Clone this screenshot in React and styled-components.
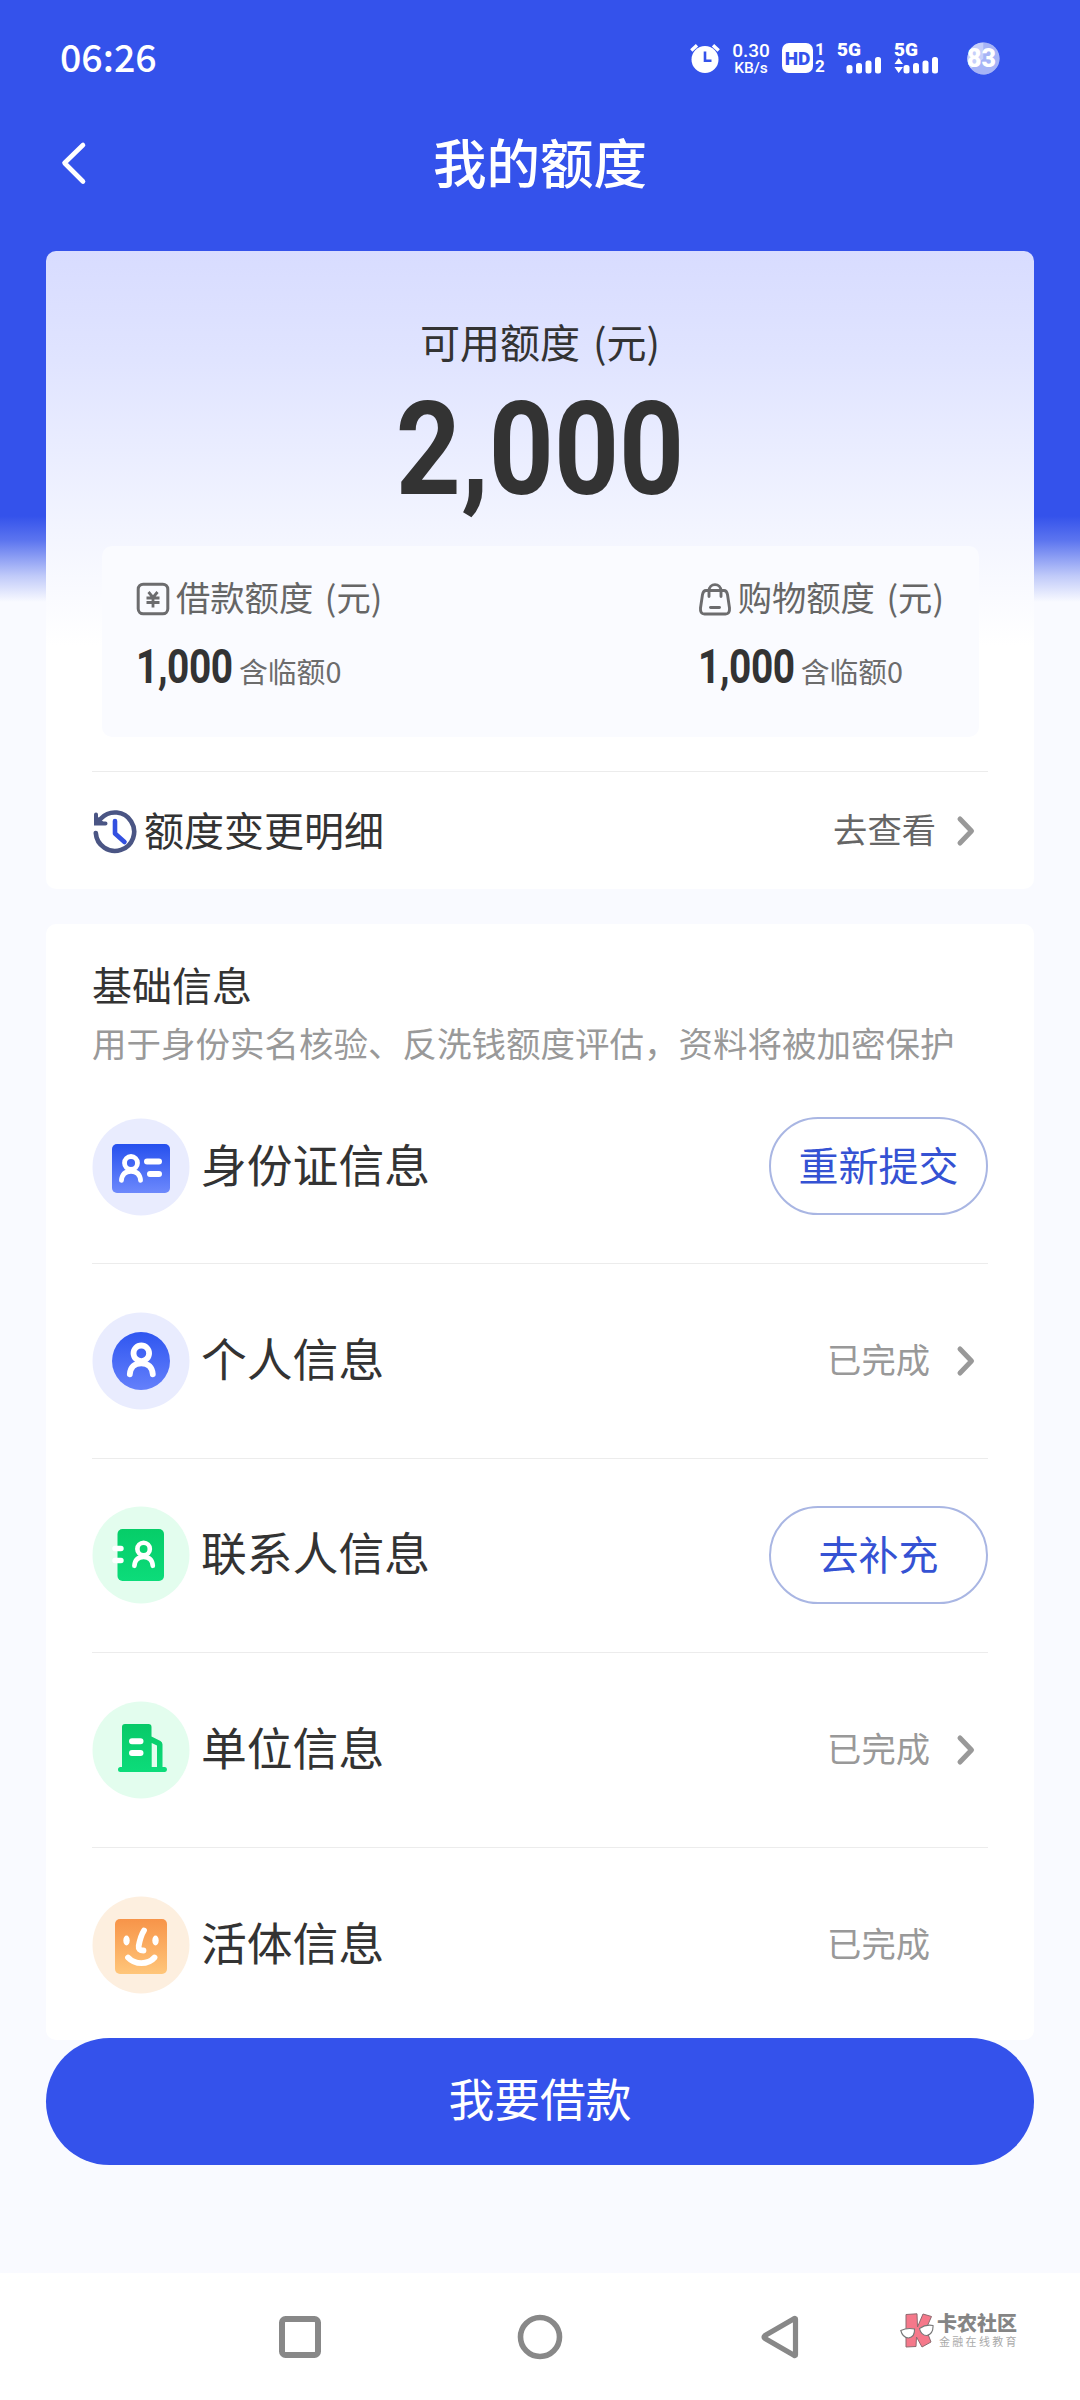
import React from "react";
import styled, { createGlobalStyle } from "styled-components";

const GlobalStyle = createGlobalStyle`
  * {
    box-sizing: border-box;
  }
  body {
    margin: 0;
    font-family: "Noto Sans CJK SC", "Noto Sans", sans-serif;
    color: #333;
  }
  svg {
    display: block;
    flex: none;
  }
`;

// Head and shoulders outline shared by the id, personal and contact badges
const Person = ({ x, y, scale = 1 }) => (
  <g
    transform={`translate(${x} ${y}) scale(${scale})`}
    fill="none"
    stroke="#fff"
    strokeWidth="5.8"
    strokeLinecap="round"
  >
    <circle r="7.8" />
    <path d="M-11.5 21C-11 14-7 10 0 10S11 14 11.5 21" />
  </g>
);

const IdBadge = () => (
  <svg width="98" height="98" viewBox="0 0 98 98">
    <defs>
      <linearGradient id="idFill" x1="0" y1="0" x2="0" y2="1">
        <stop offset="0" stopColor="#2650ee" />
        <stop offset="1" stopColor="#6d89fc" />
      </linearGradient>
    </defs>
    <circle cx="49" cy="49" r="48.5" fill="#e9ecfe" />
    <rect x="20" y="26" width="58" height="49" rx="5" fill="url(#idFill)" />
    <Person x={39} y={45} scale={0.83} />
    <path d="M55 43.5H67M58 56H67" stroke="#fff" strokeWidth="6" strokeLinecap="round" />
  </svg>
);

const PersonalBadge = () => (
  <svg width="98" height="98" viewBox="0 0 98 98">
    <defs>
      <linearGradient id="personalFill" x1="0" y1="0" x2="0" y2="1">
        <stop offset="0" stopColor="#2f56f0" />
        <stop offset="1" stopColor="#6480fb" />
      </linearGradient>
    </defs>
    <circle cx="49" cy="49" r="48.5" fill="#e9ecfe" />
    <circle cx="49" cy="49" r="29" fill="url(#personalFill)" />
    <Person x={49.3} y={41.3} />
  </svg>
);

const ContactBadge = () => (
  <svg width="98" height="98" viewBox="0 0 98 98">
    <defs>
      <linearGradient id="contactFill" x1="0" y1="0" x2="0" y2="1">
        <stop offset="0" stopColor="#06cd68" />
        <stop offset="1" stopColor="#0cdc7a" />
      </linearGradient>
    </defs>
    <circle cx="49" cy="49" r="48.5" fill="#e3fdee" />
    <rect x="25.5" y="23" width="46.5" height="52" rx="5" fill="url(#contactFill)" />
    <path d="M23 42.5H29M23 54.5H29" stroke="#fff" strokeWidth="5.4" strokeLinecap="round" />
    <Person x={51.6} y={43} scale={0.8} />
  </svg>
);

const CompanyBadge = () => (
  <svg width="98" height="98" viewBox="0 0 98 98">
    <defs>
      <linearGradient id="companyFill" x1="0" y1="0" x2="0" y2="1">
        <stop offset="0" stopColor="#08c968" />
        <stop offset="1" stopColor="#0cdc7a" />
      </linearGradient>
    </defs>
    <circle cx="49" cy="49" r="48.5" fill="#e3fdee" />
    <path
      fill="url(#companyFill)"
      fillRule="evenodd"
      d="M33 23H56.5Q59.5 23 59.5 26V35.5L68.5 40Q70.5 41 70.5 43.5V66H73Q75 66.3 75 68.5T73 71H28.5Q26 71 26 68.5T28.5 66H30V26Q30 23 33 23ZM59.7 42V66H65V44.5Z"
    />
    <path d="M40 40.3H48.5M40 52H48.5" stroke="#fff" strokeWidth="6" strokeLinecap="round" />
  </svg>
);

const FaceBadge = () => (
  <svg width="98" height="98" viewBox="0 0 98 98">
    <defs>
      <linearGradient id="faceFill" x1="0" y1="0" x2="0" y2="1">
        <stop offset="0" stopColor="#f79449" />
        <stop offset="1" stopColor="#ffc67a" />
      </linearGradient>
    </defs>
    <circle cx="49" cy="49" r="48.5" fill="#fdefdf" />
    <rect x="23" y="23" width="52" height="55" rx="5" fill="url(#faceFill)" />
    <ellipse cx="34.5" cy="44.5" rx="3.2" ry="5" fill="#fff" />
    <ellipse cx="63.5" cy="44.5" rx="3.2" ry="5" fill="#fff" />
    <g fill="none" stroke="#fff" strokeWidth="5.8" strokeLinecap="round" strokeLinejoin="round">
      <path d="M52 34.5Q48.5 40 46.7 50Q46 54.5 51.5 54.5" />
      <path d="M36 61.5C43 69 56 69 62.5 61.5" />
    </g>
  </svg>
);

const rows = [
  { label: "身份证信息", Icon: IdBadge, action: "重新提交" },
  { label: "个人信息", Icon: PersonalBadge, state: "已完成", arrow: true },
  { label: "联系人信息", Icon: ContactBadge, action: "去补充" },
  { label: "单位信息", Icon: CompanyBadge, state: "已完成", arrow: true },
  { label: "活体信息", Icon: FaceBadge, state: "已完成" },
];

const Chevron = () => (
  <svg width="20" height="34" viewBox="0 0 20 34">
    <path d="M4 5L15.5 17L4 29" fill="none" stroke="#999" strokeWidth="5" strokeLinecap="round" strokeLinejoin="round" />
  </svg>
);

const YenIcon = () => (
  <svg width="34" height="34" viewBox="0 0 34 34" fill="none" stroke="#6c6c6e">
    <rect x="2.2" y="2.2" width="29.6" height="29.6" rx="5" strokeWidth="3" />
    <path d="M12.5 10L17 15.5L21.5 10M17 15.5V25.5M10.5 16H23.5M10.5 20.5H23.5" strokeWidth="2.8" />
  </svg>
);

const BagIcon = () => (
  <svg width="34" height="34" viewBox="0 0 34 34" fill="none" stroke="#6c6c6e" strokeLinecap="round">
    <path d="M8 8.5H26C28.5 8.5 29 10 29.5 12.5L31.5 26Q32 32 27.5 32H6.5Q2 32 2.5 26L4.5 12.5C5 10 5.5 8.5 8 8.5Z" strokeWidth="2.9" />
    <path d="M11 14.5V9C11 .5 23 .5 23 9V14.5" strokeWidth="2.9" />
    <path d="M12.5 25.5H21.5" strokeWidth="2.9" />
  </svg>
);

const HistoryIcon = () => (
  <svg width="46" height="46" viewBox="0 0 46 46" fill="none">
    <path d="M3.8 25A19.2 19.2 0 1 0 9 10.5" stroke="#4a5584" strokeWidth="4.6" strokeLinecap="round" />
    <path d="M4 6.5V15.5H13.5" stroke="#4a5584" strokeWidth="4" strokeLinecap="round" />
    <path d="M4.5 7.5V15H12.5Z" fill="#4a5584" />
    <path d="M23 13V25.5L32.5 34" stroke="#3350e0" strokeWidth="4.6" strokeLinecap="round" strokeLinejoin="round" />
  </svg>
);

const AlarmIcon = () => (
  <svg width="30" height="30" viewBox="0 0 30 30">
    <circle cx="15" cy="16.5" r="13.5" fill="#fff" />
    <path d="M1.3 7.5L7 2.3M28.7 7.5L23 2.3" stroke="#fff" strokeWidth="3.4" />
    <path d="M15 8.5V17.8H21.5" fill="none" stroke="#3452eb" strokeWidth="2.6" />
  </svg>
);

const SignalBars = ({ data }) => (
  <svg width="45" height="17" viewBox="0 0 45 17" fill="#fff">
    <rect x="9.5" y="8" width="6" height="8.5" rx="2.5" />
    <rect x="19" y="6" width="6" height="10.5" rx="2.5" />
    <rect x="28.5" y="3.5" width="6" height="13" rx="2.5" />
    <rect x="38" y="0" width="6" height="16.5" rx="2.5" />
    {data && <path d="M.5 7L4.7 1L9 7ZM.5 10H9L4.7 16Z" />}
  </svg>
);

const BatteryDisc = () => (
  <svg width="33" height="33" viewBox="0 0 33 33">
    <circle cx="16.5" cy="16.5" r="16" fill="#8a9bf3" />
    <path d="M16.5 16.5V.5A16 16 0 1 1 2.5 8.7Z" fill="#a7b4f6" />
    <path d="M16.5 16.5L16.5 .5A16 16 0 0 0 4 26.5Z" fill="#c6cffa" />
  </svg>
);

// Red K wearing round glasses
const WatermarkLogo = () => (
  <svg width="34" height="36" viewBox="0 0 34 36">
    <path
      d="M6 1.5L17 .8L17.5 14L23 1L31.5 3.5L26 16L31 29L22 34L16.5 24L16 33.5L6 34Z"
      fill="#f5788a"
      stroke="#8e6a70"
      strokeWidth="1"
    />
    <g fill="#fff" stroke="#777" strokeWidth="1.1">
      <path d="M.8 17.5Q7 14.5 14.5 16Q15 24 8.5 25Q2.5 24.5 .8 17.5Z" />
      <path d="M19.5 15.5Q26 11 33 12.5Q33.5 20.5 27 22.5Q21 22.5 19.5 15.5Z" />
    </g>
  </svg>
);

export default function App() {
  return (
    <Page>
      <GlobalStyle />
      <StatusBar>
        <Clock>06:26</Clock>
        <StatusIcons>
          <AlarmIcon />
          <NetSpeed>
            <span>0.30</span>
            <small>KB/s</small>
          </NetSpeed>
          <HdBox>HD</HdBox>
          <SimNumbers>
            <span>1</span>
            <span>2</span>
          </SimNumbers>
          <Signal>
            <span>5G</span>
            <SignalBars />
          </Signal>
          <Signal>
            <span>5G</span>
            <SignalBars data />
          </Signal>
          <Battery>
            <BatteryDisc />
            <BatteryText>83</BatteryText>
          </Battery>
        </StatusIcons>
      </StatusBar>

      <TitleBar>
        <BackButton>
          <svg width="28" height="48" viewBox="0 0 28 48">
            <path d="M23 5L4.5 23L23 41.5" fill="none" stroke="#fff" strokeWidth="4.6" strokeLinecap="round" strokeLinejoin="round" />
          </svg>
        </BackButton>
        <Title>我的额度</Title>
      </TitleBar>

      <Main>
        <QuotaCard>
          <QuotaLabel>可用额度 (元)</QuotaLabel>
          <QuotaTotal>2,000</QuotaTotal>
          <QuotaPanel>
            <QuotaItem>
              <QuotaName>
                <YenIcon />
                <span>借款额度 (元)</span>
              </QuotaName>
              <QuotaValue>
                <Amount>1,000</Amount>
                <Temp>含临额0</Temp>
              </QuotaValue>
            </QuotaItem>
            <QuotaItem>
              <QuotaName>
                <BagIcon />
                <span>购物额度 (元)</span>
              </QuotaName>
              <QuotaValue>
                <Amount>1,000</Amount>
                <Temp>含临额0</Temp>
              </QuotaValue>
            </QuotaItem>
          </QuotaPanel>
          <HistoryRow>
            <HistoryIcon />
            <HistoryText>额度变更明细</HistoryText>
            <RowState $dark>去查看</RowState>
            <ArrowSlot $narrow>
              <Chevron />
            </ArrowSlot>
          </HistoryRow>
        </QuotaCard>

        <InfoCard>
          <InfoTitle>基础信息</InfoTitle>
          <InfoHint>用于身份实名核验、反洗钱额度评估，资料将被加密保护</InfoHint>
          {rows.map(({ label, Icon, action, state, arrow }) => (
            <InfoRow key={label}>
              <Icon />
              <InfoLabel>{label}</InfoLabel>
              {action && <ActionButton>{action}</ActionButton>}
              {state && <RowState>{state}</RowState>}
              {state && <ArrowSlot>{arrow && <Chevron />}</ArrowSlot>}
            </InfoRow>
          ))}
        </InfoCard>

        <BorrowButton>我要借款</BorrowButton>
      </Main>

      <SystemNav>
        <svg width="60" height="60" viewBox="0 0 60 60">
          <rect x="12" y="12" width="36" height="36" rx="3.5" fill="none" stroke="#888" strokeWidth="6" />
        </svg>
        <svg width="60" height="60" viewBox="0 0 60 60">
          <circle cx="30" cy="30" r="19.5" fill="none" stroke="#888" strokeWidth="5.6" />
        </svg>
        <svg width="60" height="60" viewBox="0 0 60 60">
          <path d="M45.5 12V48Q45.5 49 44 48.3L15 31.5Q13 30 15 28.5L44 11.7Q45.5 11 45.5 12Z" fill="none" stroke="#888" strokeWidth="5.2" strokeLinejoin="round" />
        </svg>
        <Watermark>
          <WatermarkLogo />
          <WatermarkText>
            <strong>卡农社区</strong>
            <span>金融在线教育</span>
          </WatermarkText>
        </Watermark>
      </SystemNav>
    </Page>
  );
}

const Page = styled.div`
  display: flex;
  flex-direction: column;
  width: 1080px;
  height: 2400px;
  overflow: hidden;
  background: linear-gradient(#3452eb 0, #3452eb 516px, #5b74ef 540px, #c0caf9 576px, #f9faff 602px);
`;

const StatusBar = styled.header`
  display: flex;
  align-items: center;
  justify-content: space-between;
  height: 116px;
  padding: 0 80px 0 60px;
  color: #fff;
`;
const Clock = styled.span`
  margin-top: -4px;
  font-size: 37.5px;
  font-weight: 500;
  line-height: 40px;
`;
const StatusIcons = styled.div`
  display: flex;
  align-items: center;
`;
const NetSpeed = styled.div`
  display: flex;
  flex-direction: column;
  align-items: center;
  width: 42px;
  margin: 2px 10px 0;
  font-family: Roboto, sans-serif;
  font-weight: 500;
  span {
    font-size: 19px;
    line-height: 18px;
  }
  small {
    font-size: 15.5px;
    line-height: 17px;
  }
`;
const HdBox = styled.span`
  width: 31px;
  height: 30px;
  border-radius: 7px;
  background: #fff;
  color: #3452eb;
  font: 900 19px/31px Roboto, sans-serif;
  text-align: center;
`;
const SimNumbers = styled.span`
  display: flex;
  flex-direction: column;
  align-items: center;
  width: 14px;
  font: 700 17px/17px Roboto, sans-serif;
`;
const Signal = styled.div`
  display: flex;
  flex-direction: column;
  width: 45px;
  margin-left: 10px;
  & + & {
    margin-left: 12px;
  }
  span {
    font: 900 19px/14px Roboto, sans-serif;
  }
`;
const Battery = styled.div`
  position: relative;
  margin-left: 28px;
`;
const BatteryText = styled.span`
  position: absolute;
  left: 0;
  top: 6px;
  font: 900 25px/22px Roboto, sans-serif;
`;

const TitleBar = styled.div`
  display: grid;
  grid-template-columns: 60px 1fr 60px;
  align-items: center;
  height: 96px;
  padding: 0 60px;
  color: #fff;
`;
const BackButton = styled.span`
  display: flex;
`;
const Title = styled.h1`
  margin: -6px 0 0;
  font-size: 53.5px;
  font-weight: 500;
  line-height: 60px;
  text-align: center;
`;

const Main = styled.main`
  flex: 1;
  padding: 39px 46px 0;
`;

const QuotaCard = styled.section`
  display: flex;
  flex-direction: column;
  height: 638px;
  padding: 64px 46px 0;
  border-radius: 10px;
  background: linear-gradient(#d8dcff 0, #e0e4ff 110px, #f3f5ff 280px, #fff 395px);
`;
const QuotaLabel = styled.div`
  height: 56px;
  font-size: 40px;
  line-height: 52px;
  word-spacing: 4px;
  text-align: center;
`;
const QuotaTotal = styled.div`
  height: 175px;
  padding-top: 15px;
  font: 700 129px/128px Roboto, sans-serif;
  text-align: center;
  transform: scaleX(0.88);
`;
const QuotaPanel = styled.div`
  display: flex;
  justify-content: space-between;
  height: 192px;
  margin: 0 9px 0 10px;
  padding: 30px 35px 0 34px;
  border-radius: 10px;
  background: #fafbff;
`;
const QuotaItem = styled.div`
  display: flex;
  flex-direction: column;
`;
const QuotaName = styled.div`
  display: flex;
  align-items: center;
  gap: 6px;
  height: 46px;
  font-size: 34.3px;
  line-height: 42px;
  word-spacing: 4px;
  color: #666;
  span {
    margin-top: -6px;
  }
`;
const QuotaValue = styled.div`
  display: flex;
  align-items: baseline;
  margin-top: 20px;
`;
const Amount = styled.strong`
  width: 103px;
  font: 700 48px/50px Roboto, sans-serif;
  letter-spacing: -0.5px;
  transform: scaleX(0.81);
  transform-origin: left;
`;
const Temp = styled.span`
  font-size: 28.8px;
  line-height: 40px;
  color: #6c6c6c;
`;
const HistoryRow = styled.div`
  display: flex;
  align-items: center;
  height: 118px;
  margin-top: 34px;
  border-top: 1px solid #ececec;
`;
const HistoryText = styled.span`
  flex: 1;
  margin: -3px 0 0 6px;
  font-size: 40px;
  line-height: 48px;
`;
const RowState = styled.span`
  margin-top: -6px;
  font-size: 34.3px;
  line-height: 42px;
  color: ${({ $dark }) => ($dark ? "#666" : "#999")};
`;
const ArrowSlot = styled.span`
  display: flex;
  justify-content: flex-end;
  width: ${({ $narrow }) => ($narrow ? 52 : 58)}px;
  padding-right: 12px;
`;

const InfoCard = styled.section`
  height: 1116px;
  margin-top: 35px;
  padding: 36px 46px 0;
  border-radius: 10px;
  background: #fff;
`;
const InfoTitle = styled.h2`
  margin: 0;
  font-size: 40px;
  font-weight: 400;
  line-height: 48px;
`;
const InfoHint = styled.p`
  height: 50px;
  margin: 12px 0 0;
  font-size: 34.5px;
  line-height: 44px;
  white-space: nowrap;
  color: #999;
`;
const InfoRow = styled.div`
  display: flex;
  align-items: center;
  height: 194.4px;
  border-bottom: 1px solid #ececec;
  &:last-child {
    border-bottom: 0;
  }
`;
const InfoLabel = styled.span`
  flex: 1;
  margin: -8px 0 0 11px;
  font-size: 45.8px;
  line-height: 56px;
`;
const ActionButton = styled.button`
  width: 219px;
  height: 98px;
  margin-top: -1px;
  padding: 0 0 4px;
  border: 2px solid #a9b6e3;
  border-radius: 49px;
  background: #fff;
  color: #3552d3;
  font-family: inherit;
  font-size: 40px;
  line-height: 48px;
`;

const BorrowButton = styled.button`
  display: block;
  position: relative;
  width: 988px;
  height: 127px;
  margin-top: -2px;
  padding: 0 0 9px;
  border: 0;
  border-radius: 64px;
  background: #3452eb;
  color: #fff;
  font-family: inherit;
  font-size: 45.8px;
`;

const SystemNav = styled.nav`
  position: relative;
  display: flex;
  align-items: center;
  justify-content: center;
  gap: 180px;
  height: 127px;
  background: #fff;
`;
const Watermark = styled.div`
  position: absolute;
  left: 900px;
  top: 40px;
  display: flex;
  gap: 3px;
`;
const WatermarkText = styled.div`
  display: flex;
  flex-direction: column;
  color: #858585;
  white-space: nowrap;
  strong {
    font-size: 20px;
    font-weight: 900;
    line-height: 20px;
  }
  span {
    margin: 1px 0 0 2px;
    font-size: 11px;
    line-height: 14px;
    letter-spacing: 2.3px;
    color: #aaa;
  }
`;
